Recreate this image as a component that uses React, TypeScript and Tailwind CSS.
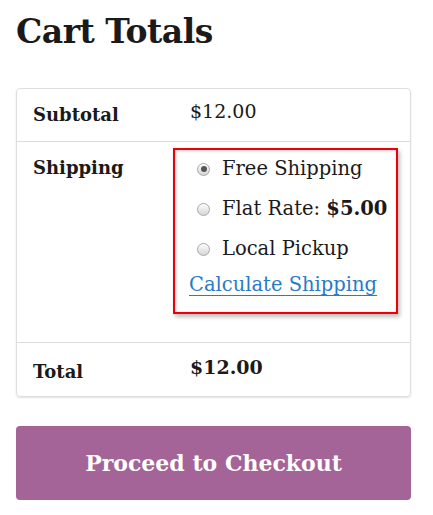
import React from 'react';

const serif = { fontFamily: '"DejaVu Serif", "Liberation Serif", serif' };

function Radio({ checked }: { checked?: boolean }) {
  return (
    <span className="relative inline-flex h-[13px] w-[13px] shrink-0 items-center justify-center rounded-full border border-[#a9a9a9] bg-gradient-to-b from-[#fdfdfd] to-[#d6d6d6]">
      {checked && <span className="h-[6px] w-[6px] rounded-full bg-[#555]" />}
    </span>
  );
}

export default function App() {
  return (
    <div className="min-h-[515px] w-[433px] bg-white pl-4 pt-[6px] text-[#1a1a1a]" style={serif}>
      <div className="w-[395px]">
        <h2 className="text-[33px] font-bold leading-[52px] tracking-[-0.5px]">Cart Totals</h2>

        <div className="mt-[30px] rounded-[4px] border border-[#dedede] shadow-[0_1px_2px_rgba(0,0,0,0.12)]">
          {/* subtotal */}
          <div className="flex h-[53px] border-b border-[#dcdcdc]">
            <div className="w-[156px] pl-4 pt-[14px] text-[18px] font-bold leading-[24px]">Subtotal</div>
            <div className="pl-[17px] pt-[10px] text-[19px] leading-[24px]">$12.00</div>
          </div>

          {/* shipping */}
          <div className="flex border-b border-[#dcdcdc] pb-[28px]">
            <div className="w-[156px] pl-4 pt-[14px] text-[18px] font-bold leading-[24px]">Shipping</div>
            <div className="mt-[6px] w-[225px] border-2 border-[#e8000b] pb-[13px] pl-[14px] shadow-[2px_3px_4px_rgba(0,0,0,0.25),inset_1px_1px_3px_rgba(0,0,0,0.2)]">
              <ul className="-mt-[1px] flex flex-col pl-[8px]">
                <li className="flex h-[40px] items-center gap-[12px] text-[19.5px]">
                  <Radio checked />
                  <span>Free Shipping</span>
                </li>
                <li className="flex h-[40px] items-center gap-[12px] text-[19.5px]">
                  <Radio />
                  <span>
                    Flat Rate: <span className="font-bold">$5.00</span>
                  </span>
                </li>
                <li className="flex h-[40px] items-center gap-[12px] text-[19.5px]">
                  <Radio />
                  <span>Local Pickup</span>
                </li>
              </ul>
              <a href="#" className="block pt-[2px] text-[19.5px] leading-[28px] text-[#2a7bc4] underline underline-offset-[4px]">
                Calculate Shipping
              </a>
            </div>
          </div>

          {/* total */}
          <div className="flex h-[53px]">
            <div className="w-[156px] pl-4 pt-[17px] text-[18px] font-bold leading-[24px]">Total</div>
            <div className="pl-[17px] pt-[12px] text-[19px] font-bold leading-[24px]">$12.00</div>
          </div>
        </div>

        <button className="mt-[29px] flex h-[74px] w-full items-center justify-center rounded-[4px] bg-[#a46497] text-[22px] font-bold text-white">
          Proceed to Checkout
        </button>
      </div>
    </div>
  );
}
